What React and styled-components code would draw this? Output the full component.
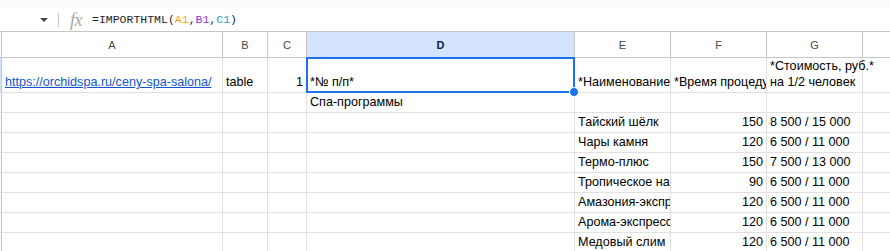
import React from "react";
import styled, { createGlobalStyle } from "styled-components";

const GlobalStyle = createGlobalStyle`
  html, body {
    margin: 0;
    padding: 0;
    background: #ffffff;
    overflow: hidden;
  }
  body {
    font-family: "Liberation Sans", Arial, sans-serif;
  }
`;

const COLS = [
  { key: "stub", width: 2 },
  { key: "A", width: 221 },
  { key: "B", width: 45 },
  { key: "C", width: 39 },
  { key: "D", width: 268 },
  { key: "E", width: 96 },
  { key: "F", width: 96 },
  { key: "G", width: 96 },
  { key: "H", width: 60 },
];

const rows = [
  {
    h: 35,
    cells: {
      A: "https://orchidspa.ru/ceny-spa-salona/",
      B: "table",
      C: "1",
      D: "*№ п/п*",
      E: "*Наименование",
      F: "*Время процедуры",
      G: "*Стоимость, руб.*\nна 1/2 человек",
    },
  },
  { h: 20, cells: { D: "Спа-программы" } },
  { h: 20, cells: { E: "Тайский шёлк", F: "150", G: "8 500 / 15 000" } },
  { h: 20, cells: { E: "Чары камня", F: "120", G: "6 500 / 11 000" } },
  { h: 20, cells: { E: "Термо-плюс", F: "150", G: "7 500 / 13 000" } },
  { h: 20, cells: { E: "Тропическое наслаждение", F: "90", G: "6 500 / 11 000" } },
  { h: 20, cells: { E: "Амазония-экспресс", F: "120", G: "6 500 / 11 000" } },
  { h: 20, cells: { E: "Арома-экспресс", F: "120", G: "6 500 / 11 000" } },
  { h: 20, cells: { E: "Медовый слим", F: "120", G: "6 500 / 11 000" } },
];

const Page = styled.div`
  width: 890px;
  height: 251px;
  overflow: hidden;
  display: flex;
  flex-direction: column;
`;

const TopBand = styled.div`
  height: 8px;
  flex: none;
  background: #f9fbfd;
`;

const FormulaBar = styled.div`
  height: 23px;
  flex: none;
  display: flex;
  align-items: center;
  border-bottom: 1px solid #c4c7c5;
  background: #ffffff;
`;

const NameBox = styled.div`
  width: 58px;
  height: 100%;
  display: flex;
  align-items: center;
  justify-content: flex-end;
  padding-right: 10px;
  box-sizing: border-box;
`;

const Caret = styled.span`
  width: 0;
  height: 0;
  border-left: 4px solid transparent;
  border-right: 4px solid transparent;
  border-top: 4px solid #444746;
`;

const Divider = styled.span`
  width: 1px;
  height: 14px;
  background: #c4c7c5;
`;

const Fx = styled.span`
  margin-left: 11px;
  width: 22px;
  font-family: "Liberation Serif", "DejaVu Serif", serif;
  font-style: italic;
  font-size: 18px;
  line-height: 18px;
  color: #a8a8a8;
  letter-spacing: -0.5px;
`;

const Formula = styled.span`
  font-family: "Liberation Mono", "DejaVu Sans Mono", monospace;
  font-size: 11.5px;
  color: #1f1f1f;
`;

const Ref = styled.span`
  color: ${(p) => p.$color};
`;

const Grid = styled.div`
  display: grid;
  grid-template-columns: ${COLS.map((c) => c.width + "px").join(" ")};
  grid-template-rows: 26px ${rows.map((r) => r.h + "px").join(" ")};
`;

const HeaderCell = styled.div`
  box-sizing: border-box;
  display: flex;
  align-items: center;
  justify-content: center;
  font-family: "Liberation Sans", Arial, sans-serif;
  font-size: 11px;
  color: ${(p) => (p.$active ? "#041e49" : "#444746")};
  font-weight: ${(p) => (p.$active ? 700 : 400)};
  background: ${(p) => (p.$active ? "#d3e3fd" : "#ffffff")};
  border-right: 1px solid #c4c7c5;
  border-bottom: 1px solid #c4c7c5;
`;

const StubCell = styled.div`
  box-sizing: border-box;
  background: ${(p) => (p.$active ? "#d3e3fd" : "#f8f9fa")};
  border-right: 1px solid #c4c7c5;
  border-bottom: 1px solid ${(p) => (p.$header ? "#c4c7c5" : "#e1e1e1")};
`;

const Cell = styled.div`
  position: relative;
  box-sizing: border-box;
  min-width: 0;
  border-right: 1px solid #e1e1e1;
  border-bottom: 1px solid #e1e1e1;
  padding: 0 3px 2px 3px;
  display: flex;
  align-items: flex-end;
  justify-content: ${(p) => (p.$right ? "flex-end" : "flex-start")};
  overflow: ${(p) => (p.$overflow ? "visible" : "hidden")};
  font-size: 12.6px;
  line-height: 16px;
  color: #000000;
  white-space: pre;
  z-index: ${(p) => p.$z};
`;

const Link = styled.a`
  color: #1155cc;
  text-decoration: underline;
`;

const Selection = styled.div`
  position: absolute;
  left: -1px;
  top: -1px;
  right: -1px;
  bottom: -1px;
  border: 2px solid #1a73e8;
  pointer-events: none;
`;

const Handle = styled.span`
  position: absolute;
  right: -6px;
  bottom: -6px;
  width: 8px;
  height: 8px;
  border-radius: 50%;
  background: #1a73e8;
  border: 1px solid #ffffff;
`;

const isNumber = (v) => typeof v === "string" && /^\d+$/.test(v);
const isUrl = (v) => typeof v === "string" && v.startsWith("http");

export default function App() {
  return (
    <Page>
      <GlobalStyle />
      <TopBand />
      <FormulaBar>
        <NameBox>
          <Caret />
        </NameBox>
        <Divider />
        <Fx>fx</Fx>
        <Formula>
          =IMPORTHTML(<Ref $color="#e8a317">A1</Ref>,
          <Ref $color="#9334e6">B1</Ref>,
          <Ref $color="#12a4c8">C1</Ref>)
        </Formula>
      </FormulaBar>
      <Grid>
        {COLS.map((c) =>
          c.key === "stub" ? (
            <StubCell key="h-stub" $header />
          ) : (
            <HeaderCell key={"h-" + c.key} $active={c.key === "D"}>
              {c.key === "H" ? "" : c.key}
            </HeaderCell>
          )
        )}
        {rows.map((row, r) =>
          COLS.map((c, ci) => {
            if (c.key === "stub") {
              return <StubCell key={r + "-stub"} $active={r === 0} />;
            }
            const value = row.cells[c.key];
            const next = COLS[ci + 1];
            const nextEmpty = !next || !row.cells[next.key];
            const selected = r === 0 && c.key === "D";
            const spills = !!value && nextEmpty && !isNumber(value);
            return (
              <Cell
                key={r + "-" + c.key}
                $right={isNumber(value)}
                $overflow={spills || selected}
                $z={selected ? 2 : spills ? 1 : 0}
              >
                {isUrl(value) ? <Link href="#">{value}</Link> : value}
                {selected && (
                  <Selection>
                    <Handle />
                  </Selection>
                )}
              </Cell>
            );
          })
        )}
      </Grid>
    </Page>
  );
}
